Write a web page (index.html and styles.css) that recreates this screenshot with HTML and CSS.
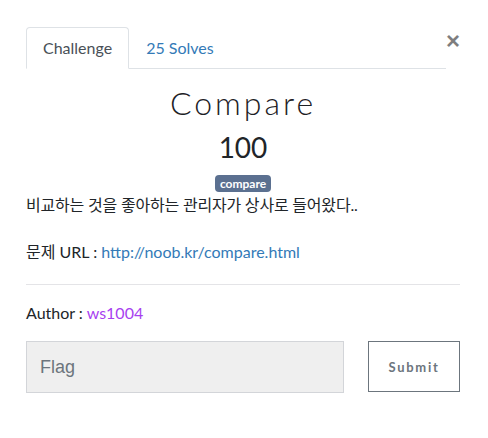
FILE: index.html
```html
<!DOCTYPE html>
<html lang="ko">
<head>
<meta charset="utf-8">
<title>Compare</title>
<link rel="stylesheet" href="styles.css">
</head>
<body>
<div class="modal">
  <div class="header">
    <ul class="nav-tabs">
      <li class="tab active">Challenge</li>
      <li class="tab link">25 Solves</li>
    </ul>
    <button class="close" type="button" aria-label="Close">&times;</button>
  </div>
  <div class="body">
    <h2 class="title">Compare</h2>
    <h3 class="value">100</h3>
    <div class="tags"><span class="badge">compare</span></div>
    <p class="desc ko">비교하는 것을 좋아하는 관리자가 상사로 들어왔다..</p>
    <p class="desc url">문제 URL : <a href="#">http://noob.kr/compare.html</a></p>
    <hr class="rule">
    <p class="author">Author : <a class="visited" href="#">ws1004</a></p>
    <div class="submit-row">
      <input class="flag" type="text" placeholder="Flag">
      <button class="submit" type="button">Submit</button>
    </div>
  </div>
</div>
</body>
</html>
```
FILE: styles.css
```css
* { box-sizing: border-box; }
html, body { margin: 0; padding: 0; background: #fff; }
body {
  font-family: "Lato", "Noto Sans CJK KR", sans-serif;
  font-size: 16px;
  line-height: 1.5;
  color: #212529;
}
.modal { padding: 27px 28px 0 26px; }
.header { display: flex; align-items: flex-start; }
.nav-tabs {
  flex: 1;
  display: flex;
  list-style: none;
  margin: 0;
  padding: 0;
  border-bottom: 1px solid #dee2e6;
}
.tab {
  padding: 8px 16px;
  border: 1px solid transparent;
  border-radius: 4px 4px 0 0;
  margin-bottom: -1px;
}
.tab.active {
  color: #495057;
  border-color: #dee2e6 #dee2e6 #fff;
  background: #fff;
}
.tab.link { color: #337ab7; }
.close {
  width: 14px;
  padding: 0;
  border: 0;
  background: none;
  font-family: "Liberation Sans", sans-serif;
  font-size: 24px;
  font-weight: 700;
  line-height: 24px;
  color: #000;
  opacity: .5;
  margin-top: 2px;
}
.body { text-align: left; }
.title {
  margin: 14px 0 0;
  text-align: center;
  font-weight: 300;
  font-size: 32px;
  line-height: 40px;
  letter-spacing: 3px;
  color: #1d2125;
}
.value {
  margin: 7px 0 0;
  text-align: center;
  font-weight: 400;
  font-size: 28px;
  line-height: 34px;
}
.tags { text-align: center; line-height: 17px; margin-top: 11px; }
.badge {
  display: inline-block;
  vertical-align: top;
  padding: 2px 5px;
  font-size: 12px;
  font-weight: 700;
  line-height: 13px;
  color: #fff;
  background: #5b7090;
  border-radius: 4px;
}
.desc { margin: 1px 0 0; }
.desc.ko { letter-spacing: -0.2px; }
.desc.url { margin-top: 23px; }
a { color: #337ab7; text-decoration: none; }
a.visited { color: #a83ff0; }
.rule {
  margin: 20px 0 0;
  border: 0;
  border-top: 1px solid #e4e4e7;
}
.author { margin: 16px 0 0; }
.submit-row {
  display: flex;
  justify-content: space-between;
  margin-top: 16px;
}
.flag {
  width: 318px;
  height: 52px;
  padding: 0 13px;
  border: 1px solid #d3d5d9;
  background: #efefef;
  font-family: "Liberation Sans", sans-serif;
  font-size: 18px;
  color: #495057;
}
.flag::placeholder { color: #6c757d; }
.submit {
  width: 92px;
  height: 51px;
  border: 1px solid #6c757d;
  background: #fff;
  font-family: "Lato", sans-serif;
  font-size: 13px;
  font-weight: 700;
  letter-spacing: 1.7px;
  color: #6c757d;
}
```
